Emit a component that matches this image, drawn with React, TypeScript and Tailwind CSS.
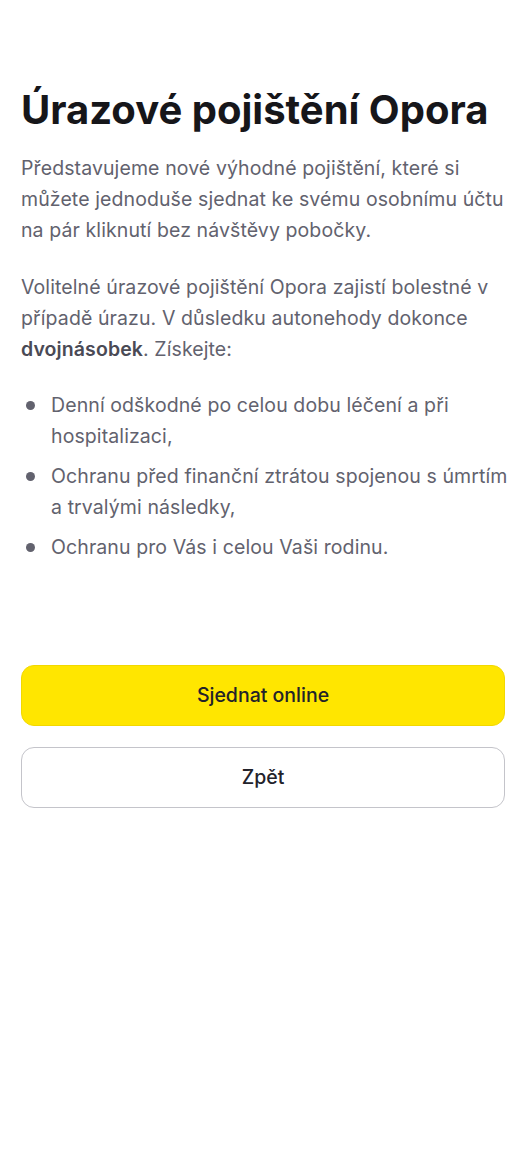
export default function App() {
  const bullets: string[][] = [
    ["Denní odškodné po celou dobu léčení a při", "hospitalizaci,"],
    ["Ochranu před finanční ztrátou spojenou s úmrtím", "a trvalými následky,"],
    ["Ochranu pro Vás i celou Vaši rodinu."],
  ];
  return (
    <div className="min-h-[1168px] w-[526px] bg-white px-[21px] pt-[83px]" style={{ fontFamily: "Inter, 'Noto Sans', sans-serif" }}>
      <h1 className="text-[40px] font-bold leading-[54px] text-[#16161a]">Úrazové pojištění Opora</h1>
      <p className="mt-[16px] whitespace-nowrap text-[19.5px] leading-[31px] tracking-[0.1px] text-[#62626e]">
        Představujeme nové výhodné pojištění, které si
        <br />
        můžete jednoduše sjednat ke svému osobnímu účtu
        <br />
        na pár kliknutí bez návštěvy pobočky.
      </p>
      <p className="mt-[26px] whitespace-nowrap text-[19.5px] leading-[31px] tracking-[0.1px] text-[#62626e]">
        Volitelné úrazové pojištění Opora zajistí bolestné v
        <br />
        případě úrazu. V důsledku autonehody dokonce
        <br />
        <span className="font-semibold text-[#4a4a55]">dvojnásobek</span>. Získejte:
      </p>
      <ul className="mt-[25px] flex flex-col gap-[9px]">
        {bullets.map((b) => (
          <li key={b[0]} className="flex whitespace-nowrap text-[19.5px] leading-[31px] tracking-[0.1px] text-[#62626e]">
            <span className="flex h-[31px] w-[30px] shrink-0 items-center pl-[5px]">
              <span className="h-[9px] w-[9px] rounded-full bg-[#62626e]" />
            </span>
            <span className="flex flex-col">
              {b.map((line) => (
                <span key={line}>{line}</span>
              ))}
            </span>
          </li>
        ))}
      </ul>
      <div className="mt-[102px] flex flex-col gap-[21px]">
        <button className="flex h-[61px] items-center justify-center rounded-[13px] border border-[#f2d800] bg-[#ffe600] text-[19.5px] font-medium text-[#22222a]">
          Sjednat online
        </button>
        <button className="flex h-[61px] items-center justify-center rounded-[13px] border border-[#c4c4ca] bg-white text-[19.5px] font-medium text-[#22222a]">
          Zpět
        </button>
      </div>
    </div>
  );
}
